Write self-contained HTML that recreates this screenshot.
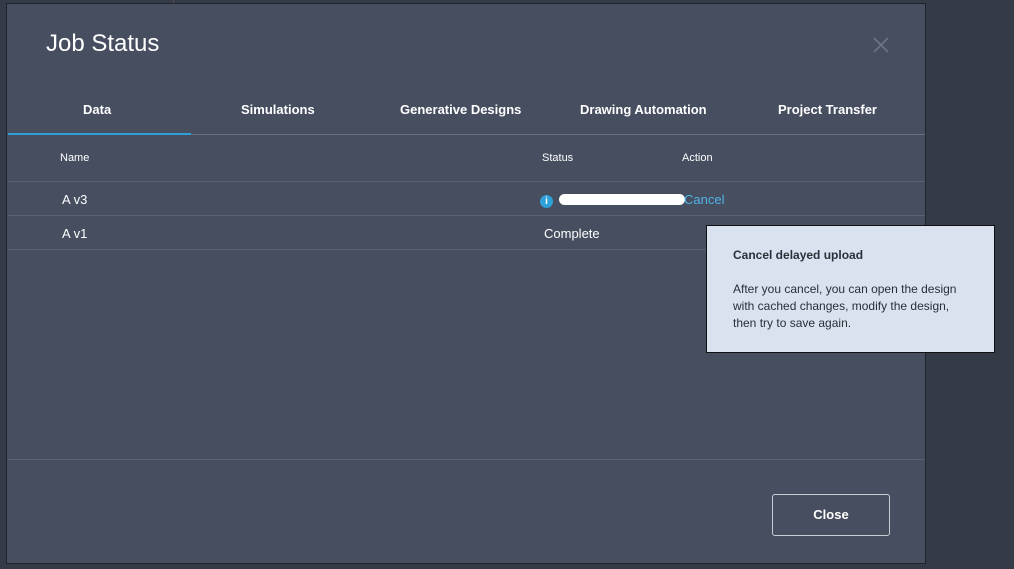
<!DOCTYPE html>
<html><head><style>
body{margin:0;width:1014px;height:569px;background:#343b47;position:relative;overflow:hidden;font-family:"Liberation Sans",sans-serif;}
.dlg{position:absolute;left:6px;top:3px;width:918px;height:559px;background:#464e60;border:1px solid #1f232b;}
.t{position:absolute;color:#fff;}
.line{position:absolute;left:1px;right:0;height:1px;background:#586072;}
.tab{position:absolute;top:98px;color:#fff;font-weight:bold;font-size:13px;}
.tip{position:absolute;left:706px;top:225px;width:287px;height:126px;background:#d9e2ee;border:1px solid #111;color:#2a2f38;font-size:12px;}
</style></head><body>
<div style="position:absolute;left:173px;top:0;width:1px;height:3px;background:#555"></div>
<div class="dlg">
<div class="t" style="left:39px;top:26px;font-size:24px;">Job Status</div>
<svg style="position:absolute;left:866px;top:33px" width="16" height="16"><path d="M1 1L15 15M15 1L1 15" stroke="#6c7486" stroke-width="1.6"/></svg>
<div class="tab" style="left:76px">Data</div>
<div class="tab" style="left:234px">Simulations</div>
<div class="tab" style="left:393px">Generative Designs</div>
<div class="tab" style="left:573px">Drawing Automation</div>
<div class="tab" style="left:771px">Project Transfer</div>
<div class="line" style="top:130px;background:#6a7282"></div>
<div style="position:absolute;left:1px;top:129px;width:183px;height:2px;background:#2fa0d8"></div>
<div class="t" style="left:53px;top:148px;font-size:11px;">Name</div>
<div class="t" style="left:535px;top:148px;font-size:11px;">Status</div>
<div class="t" style="left:675px;top:148px;font-size:11px;">Action</div>
<div class="line" style="top:177px"></div>
<div class="t" style="left:55px;top:188px;font-size:13px;">A v3</div>
<div style="position:absolute;left:533px;top:191px;width:13px;height:13px;border-radius:50%;background:#2fa0d8;color:#fff;font-size:10px;font-weight:bold;text-align:center;line-height:13px;">i</div>
<div style="position:absolute;left:552px;top:190px;width:126px;height:11px;border-radius:6px;background:#fff;"></div>
<div class="t" style="left:677px;top:188px;font-size:13px;color:#4fb3e8;">Cancel</div>
<div class="line" style="top:211px"></div>
<div class="t" style="left:55px;top:222px;font-size:13px;">A v1</div>
<div class="t" style="left:537px;top:222px;font-size:13px;">Complete</div>
<div class="line" style="top:245px"></div>
<div class="line" style="top:455px"></div>
<div style="position:absolute;left:765px;top:490px;width:116px;height:40px;border:1px solid #c8ccd4;border-radius:3px;color:#fff;font-weight:bold;font-size:13px;text-align:center;line-height:40px;">Close</div>
</div>
<div class="tip">
<div style="position:absolute;left:26px;top:22px;font-weight:bold;">Cancel delayed upload</div>
<div style="position:absolute;left:26px;top:55px;width:250px;line-height:17px;">After you cancel, you can open the design<br>with cached changes, modify the design,<br>then try to save again.</div>
</div>
</body></html>
